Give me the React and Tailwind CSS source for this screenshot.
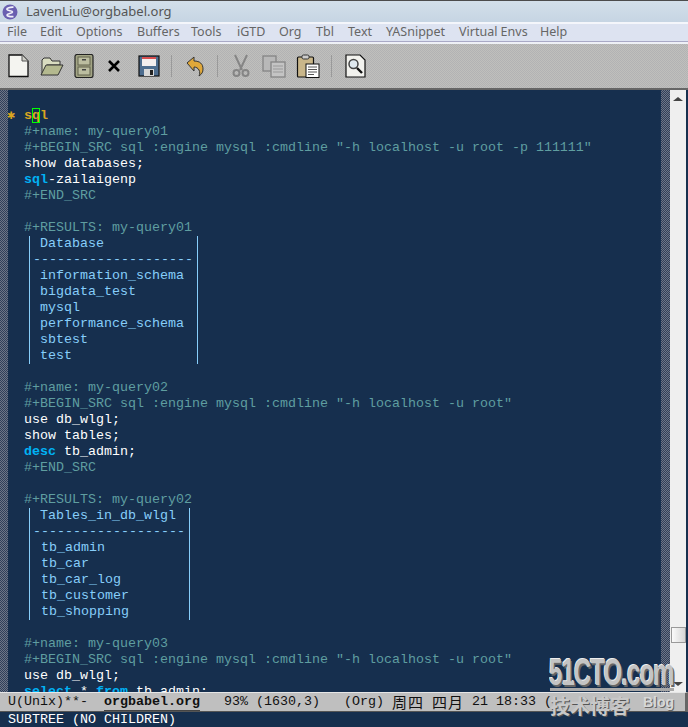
const menus = [
  ["File", "w-[33px]"],
  ["Edit", "w-[36px]"],
  ["Options", "w-[61px]"],
  ["Buffers", "w-[54px]"],
  ["Tools", "w-[46px]"],
  ["iGTD", "w-[42px]"],
  ["Org", "w-[37px]"],
  ["Tbl", "w-[32px]"],
  ["Text", "w-[38px]"],
  ["YASnippet", "w-[73px]"],
  ["Virtual Envs", "w-[81px]"],
  ["Help", "w-[40px]"],
];

function Line({ children, className = "" }) {
  return <div className={"h-4 leading-4 whitespace-pre " + className}>{children || " "}</div>;
}

const Meta = ({ children }) => <Line className="text-[#5f9ea0]">{"  " + children}</Line>;
const Code = ({ children }) => <Line className="text-white">{"  " + children}</Line>;
const Kw = ({ children }) => <span className="font-bold text-[#00b2f5]">{children}</span>;

function ResultTable({ header, rows, width, rowPad, dashes }) {
  return (
    <div className={"ml-[21px] border-x border-[#87cefa] text-[#87cefa] " + width}>
      <Line className="pl-[10px]">{header}</Line>
      <Line className="pl-[3px]">{"-".repeat(dashes)}</Line>
      {rows.map((row) => (
        <Line key={row} className={rowPad}>
          {row}
        </Line>
      ))}
    </div>
  );
}

function NewIcon() {
  return (
    <svg width="24" height="24" viewBox="0 0 24 24">
      <path d="M3 1h13l6 6v15.500H3z" fill="#f4f4f0" stroke="#111" strokeWidth="1.300" />
      <path d="M16 1v6h6" fill="#cfcfc8" stroke="#555" />
    </svg>
  );
}

function FolderIcon() {
  return (
    <svg width="24" height="24" viewBox="0 0 24 24">
      <path d="M2 21V6l2-2h6l2 3h8v4H7z" fill="#d9dcc0" stroke="#333" />
      <path d="M1 21l5-10h17l-5 10z" fill="#b4b98f" stroke="#333" />
    </svg>
  );
}

function CabinetIcon() {
  return (
    <svg width="24" height="24" viewBox="0 0 24 24">
      <rect x="3" y="0.500" width="18" height="23" rx="2" fill="#a3a585" stroke="#222" strokeWidth="1.200" />
      <rect x="6" y="3" width="12" height="8" fill="#bcbea0" stroke="#62634c" />
      <rect x="6" y="13" width="12" height="8" fill="#bcbea0" stroke="#62634c" />
      <rect x="10" y="5" width="4" height="1.500" fill="#444" />
      <rect x="10" y="15" width="4" height="1.500" fill="#444" />
    </svg>
  );
}

function CloseIcon() {
  return (
    <svg width="24" height="24" viewBox="0 0 24 24">
      <path d="M7 7l10 10M17 7L7 17" stroke="#000" strokeWidth="2.600" fill="none" />
    </svg>
  );
}

function SaveIcon() {
  return (
    <svg width="24" height="24" viewBox="0 0 24 24">
      <rect x="2" y="2" width="20" height="20" fill="#4d6d8f" stroke="#111" strokeWidth="1.200" />
      <rect x="5" y="3" width="14" height="9" fill="#f2eeee" />
      <rect x="5" y="3" width="14" height="2" fill="#d85050" />
      <rect x="7" y="15" width="10" height="7" fill="#d8d8d8" />
      <rect x="13" y="16" width="3" height="5" fill="#222" />
    </svg>
  );
}

function UndoIcon() {
  return (
    <svg width="24" height="24" viewBox="0 0 24 24">
      <path d="M4 9l7-6v4c6 0 9 3 9 8 0 3-1 5-4 7 1-2 1-4 0-6-1-2-3-3-5-3v4z" fill="#e0a83a" stroke="#333" strokeWidth="1" />
    </svg>
  );
}

function CutIcon() {
  return (
    <svg width="24" height="24" viewBox="0 0 24 24" fill="none" stroke="#858585">
      <path d="M6 1l7 15M18 1l-7 15" strokeWidth="2" />
      <circle cx="7.500" cy="19" r="3" strokeWidth="2" />
      <circle cx="16.500" cy="19" r="3" strokeWidth="2" />
    </svg>
  );
}

function CopyIcon() {
  return (
    <svg width="24" height="24" viewBox="0 0 24 24">
      <rect x="1" y="2" width="13" height="15" fill="#b8b8b8" stroke="#858585" strokeWidth="1.300" />
      <rect x="9" y="8" width="14" height="15" fill="#c4c4c4" stroke="#858585" strokeWidth="1.300" />
      <path d="M11 12h10M11 15h10M11 18h10" stroke="#9a9a9a" />
    </svg>
  );
}

function PasteIcon() {
  return (
    <svg width="24" height="24" viewBox="0 0 24 24">
      <rect x="1.500" y="3" width="16" height="20" rx="1" fill="#c9b68a" stroke="#111" strokeWidth="1.200" />
      <rect x="6" y="1" width="7" height="4" rx="1.500" fill="#ccc" stroke="#333" />
      <rect x="10" y="10" width="13" height="13.500" fill="#fff" stroke="#111" />
      <path d="M12 13h9M12 15.500h9M12 18h9M12 20.500h6" stroke="#555" />
    </svg>
  );
}

function FindIcon() {
  return (
    <svg width="24" height="24" viewBox="0 0 24 24">
      <path d="M3 1h14l5 5v17H3z" fill="#f2f2ee" stroke="#111" strokeWidth="1.200" />
      <circle cx="10.500" cy="10" r="4.500" fill="#dfe8ee" stroke="#444" strokeWidth="1.500" />
      <path d="M14 14l5 5" stroke="#111" strokeWidth="2.400" />
    </svg>
  );
}

function EmacsIcon() {
  return (
    <svg width="16" height="16" viewBox="0 0 16 16" className="ml-[2px] shrink-0">
      <circle cx="8" cy="8" r="7.500" fill="#6a5fb0" />
      <path d="M11.500 3.200C8 3 4.500 4 5 5.500c.5 1.500 5.500 1 5.500 2.500S5 9.500 5 11c0 1.300 3.500 2 6.500 1.500" fill="none" stroke="#f2f2fa" strokeWidth="1.700" />
    </svg>
  );
}

const Sep = ({ className }) => <div className={"h-[22px] w-px bg-[#9a9a9a] " + className} />;

export default function App() {
  return (
    <div className="relative flex h-[727px] w-[688px] flex-col overflow-hidden bg-[#162f4e] font-['Liberation_Mono',monospace] text-[13.33px]">
      {/* window title */}
      <div className="flex h-[22px] items-center gap-2 border-t border-[#4c4c4c] bg-gradient-to-b from-[#d3dfea] to-[#c6d5e3] font-['Noto_Sans',sans-serif] text-[13px] text-[#555]">
        <EmacsIcon />
        <span>LavenLiu@orgbabel.org</span>
      </div>

      {/* menu bar */}
      <div className="flex h-[20px] items-center border-t-2 border-b border-t-[#f4f6fb] border-b-[#a9a9c6] bg-[#dde3f1] pl-[7px] font-['Noto_Sans',sans-serif] text-[12.500px] text-[#666]">
        {menus.map(([label, w]) => (
          <span key={label} className={"shrink-0 whitespace-pre " + w}>
            {label}
          </span>
        ))}
      </div>

      {/* tool bar */}
      <div className="flex h-[48px] items-center border-t-2 border-b-2 border-t-[#eef0f6] border-b-[#666] bg-[#b9b9b7] bg-[image:repeating-conic-gradient(#c0c0bc_0_25%,#b2b2b4_0_50%)] bg-[length:2px_2px] pl-[6px]">
        <NewIcon />
        <div className="ml-[10px]"><FolderIcon /></div>
        <div className="ml-[8px]"><CabinetIcon /></div>
        <div className="ml-[6px]"><CloseIcon /></div>
        <div className="ml-[11px]"><SaveIcon /></div>
        <Sep className="ml-[10px]" />
        <div className="ml-[11px]"><UndoIcon /></div>
        <Sep className="ml-[10px]" />
        <div className="ml-[11px]"><CutIcon /></div>
        <div className="ml-[9px]"><CopyIcon /></div>
        <div className="ml-[10px]"><PasteIcon /></div>
        <Sep className="ml-[11px]" />
        <div className="ml-[11px]"><FindIcon /></div>
      </div>

      {/* buffer */}
      <div className="flex min-h-0 flex-1">
        <div className="w-2 shrink-0 bg-[image:repeating-conic-gradient(#6e7686_0_25%,#2f3f5a_0_50%)] bg-[length:2px_2px]" />
        <div className="w-[653px] shrink-0 overflow-hidden pt-[18px]">
          <Line className="font-bold text-[#daa520]">
            <span className="inline-block w-2 -translate-x-px">✱</span>
            {" s"}
            <span className="outline-1 -outline-offset-1 outline-[#00ff00]">q</span>l
          </Line>
          <Meta>#+name: my-query01</Meta>
          <Meta>{'#+BEGIN_SRC sql :engine mysql :cmdline "-h localhost -u root -p 111111"'}</Meta>
          <Code>show databases;</Code>
          <Line className="text-white">
            {"  "}
            <Kw>sql</Kw>-zailaigenp
          </Line>
          <Meta>#+END_SRC</Meta>
          <Line />
          <Meta>#+RESULTS: my-query01</Meta>
          <ResultTable
            header="Database"
            width="w-[169px]"
            rowPad="pl-[10px]"
            dashes={20}
            rows={["information_schema", "bigdata_test", "mysql", "performance_schema", "sbtest", "test"]}
          />
          <Line />
          <Meta>#+name: my-query02</Meta>
          <Meta>{'#+BEGIN_SRC sql :engine mysql :cmdline "-h localhost -u root"'}</Meta>
          <Code>use db_wlgl;</Code>
          <Code>show tables;</Code>
          <Line className="text-white">
            {"  "}
            <Kw>desc</Kw> tb_admin;
          </Line>
          <Meta>#+END_SRC</Meta>
          <Line />
          <Meta>#+RESULTS: my-query02</Meta>
          <ResultTable
            header="Tables_in_db_wlgl"
            width="w-[161px]"
            rowPad="pl-[11px]"
            dashes={19}
            rows={["tb_admin", "tb_car", "tb_car_log", "tb_customer", "tb_shopping"]}
          />
          <Line />
          <Meta>#+name: my-query03</Meta>
          <Meta>{'#+BEGIN_SRC sql :engine mysql :cmdline "-h localhost -u root"'}</Meta>
          <Code>use db_wlgl;</Code>
          <Line className="text-white">
            {"  "}
            <Kw>select</Kw> * <Kw>from</Kw> tb_admin;
          </Line>
        </div>
        <div className="w-[9px] shrink-0 bg-[image:repeating-conic-gradient(#6e7686_0_25%,#2f3f5a_0_50%)] bg-[length:2px_2px]" />
        {/* scroll bar */}
        <div className="flex w-[16px] shrink-0 flex-col items-center bg-[#efefef] pt-[7px] pb-[6px]">
          <div className="h-0 w-0 border-x-[5px] border-b-[4px] border-x-transparent border-b-[#444]" />
          <div className="mt-[526px] h-[16px] w-[15px] border border-[#999] bg-gradient-to-r from-[#fafafa] to-[#d6d6d6]" />
          <div className="mt-auto h-0 w-0 border-x-[5px] border-t-[4px] border-x-transparent border-t-[#444]" />
        </div>
      </div>

      {/* mode line */}
      <div className="flex h-[20px] shrink-0 items-center whitespace-pre border-t border-b border-r-[3px] border-t-[#e6e6e6] border-b-[#555] border-r-[#666] bg-[#bfbfbf] pl-2 leading-4 text-[#111]">
        <span>U(Unix)**-  </span>
        <span className="border-b border-[#444] font-bold">orgbabel.org</span>
        <span>{"   93% (1630,3)   (Org) "}</span>
        <span className="font-['Noto_Sans_CJK_SC',sans-serif] text-[15px] tracking-[1px]">周四</span>
        <span> </span>
        <span className="font-['Noto_Sans_CJK_SC',sans-serif] text-[15px] tracking-[1px]">四月</span>
        <span>{" 21 18:33 ("}</span>
      </div>

      {/* echo area */}
      <div className="h-[15px] shrink-0 whitespace-pre pl-2 leading-4 text-white">SUBTREE (NO CHILDREN)</div>

      {/* site watermark */}
      <div className="absolute top-[655px] left-[549px] origin-left scale-x-[.67] whitespace-pre font-['Liberation_Sans',sans-serif] text-[36px] leading-[36px] font-bold tracking-[-1.500px] text-[#c4c4c4] [text-shadow:2px_2px_0_#666,-1px_-1px_0_#eee]">
        51CTO.com
      </div>
      <div className="absolute top-[688px] left-[550px] h-[3px] w-[124px] bg-[#a8a8a8]" />
      <div className="absolute top-[694px] left-[550px] font-['Noto_Sans_CJK_SC',sans-serif] text-[20px] leading-[24px] font-bold text-[#c8c8c8] [text-shadow:1px_1px_0_#555]">
        技术博客
      </div>
      <div className="absolute top-[693px] left-[643px] font-['Liberation_Sans',sans-serif] text-[14px] leading-[18px] font-bold text-[#d8d8d8] [text-shadow:1px_1px_0_#666]">
        Blog
      </div>
    </div>
  );
}
